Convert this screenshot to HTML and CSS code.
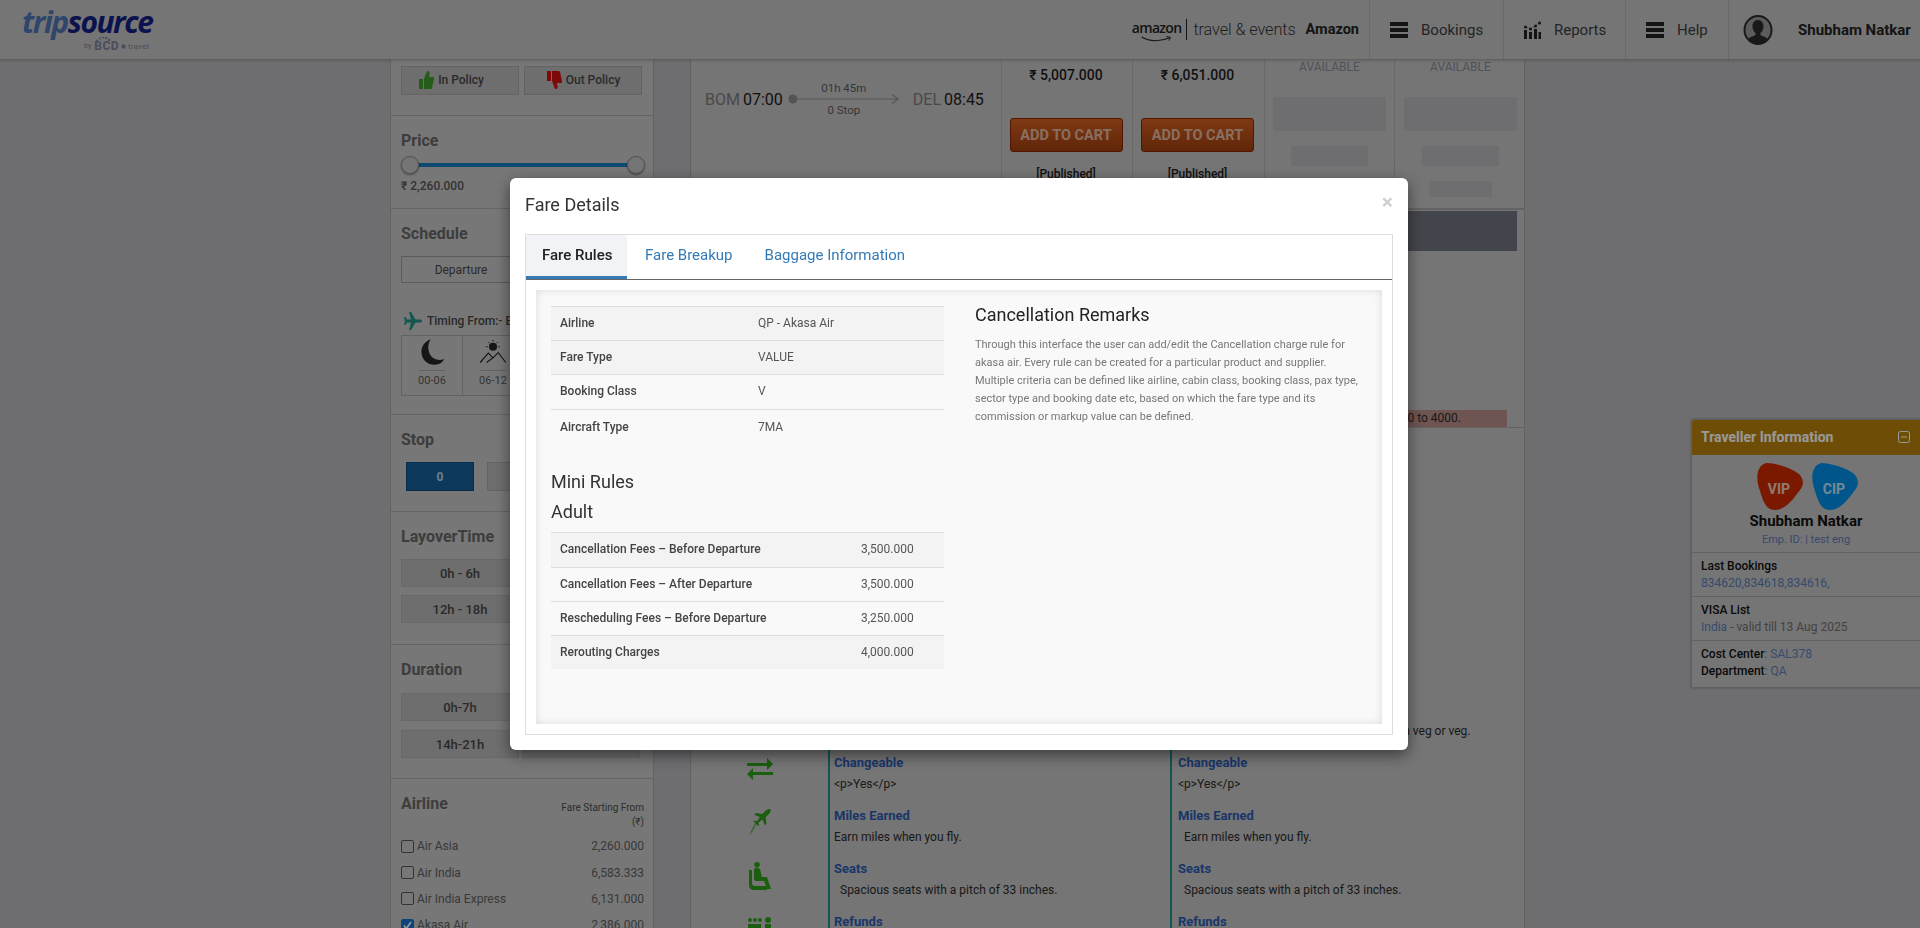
FILE: index.html
```html
<!DOCTYPE html>
<html lang="en">
<head>
<meta charset="utf-8">
<title>Fare Details</title>
<link rel="stylesheet" href="styles.css">
</head>
<body>
<header class="topbar">
  <div class="logo">
    <div class="logo-word"><span class="logo-trip">trip</span><span class="logo-source">source</span></div>
    <div class="logo-by"><span class="by">by</span><span class="bcd">BCD</span><svg class="bcd-dot" viewBox="0 0 6 6"><circle cx="3" cy="3" r="2.6"/></svg><span class="travel">travel</span>
      <svg class="bcd-arc" viewBox="0 0 16 6"><circle cx="2" cy="4.500" r="1"/><circle cx="5" cy="2.500" r="1"/><circle cx="8" cy="1.500" r="1"/><circle cx="11" cy="2" r="1.200"/><circle cx="14" cy="4" r="1.300"/></svg>
    </div>
  </div>
  <div class="brand">
    <span class="amazon">amazon<svg class="smile" viewBox="0 0 40 7"><path d="M2 1c10 6 24 6 35 1" fill="none" stroke="#222" stroke-width="1.4"/><path d="M33 .5l5 1-2 4" fill="none" stroke="#222" stroke-width="1.2"/></svg></span>
    <span class="brand-rule"></span>
    <span class="brand-sub">travel &amp; events</span>
    <span class="brand-co">Amazon</span>
  </div>
  <nav class="nav">
    <a class="nav-item nav-bookings"><svg class="nav-icon" viewBox="0 0 18 16"><path d="M0 0h18v4H0zM0 6h18v4H0zM0 12h18v4H0z"/></svg>Bookings</a>
    <a class="nav-item nav-reports"><svg class="nav-icon" viewBox="0 0 18 18"><path d="M1 9h3v9H1zM6 11h3v7H6zM11 8h3v10h-3zM15.500 11h2.500v7h-2.500z"/><circle cx="2.500" cy="6" r="1.500"/><circle cx="7.500" cy="8" r="1.500"/><circle cx="12.500" cy="5" r="1.500"/><circle cx="16.500" cy="2" r="1.500"/><path d="M2.500 6l5 2 5-3 4-3" fill="none" stroke="#222" stroke-width=".7" stroke-dasharray="1 1"/></svg>Reports</a>
    <a class="nav-item nav-help"><svg class="nav-icon" viewBox="0 0 18 16"><path d="M0 0h18v4H0zM0 6h18v4H0zM0 12h18v4H0z"/></svg>Help</a>
    <a class="nav-item nav-user">
      <svg class="avatar" viewBox="0 0 30 30"><ellipse cx="15" cy="15" rx="13.500" ry="14" fill="#9a9a9a" stroke="#2b2b2b" stroke-width="2"/><path d="M15 5c4 0 5.500 3 5.500 6.500 0 3-1.500 5.500-3 6.500v2c2 1.500 6 2 7.500 4-2.500 3-6 4.500-10 4.500s-7.500-1.500-10-4.500c1.500-2 5.500-2.500 7.500-4v-2c-1.500-1-3-3.500-3-6.500C9.500 8 11 5 15 5z" fill="#2b2b2b"/></svg>
      <span class="user-name">Shubham Natkar</span>
    </a>
  </nav>
</header>

<div class="layout">
  <aside class="sidebar">
    <section class="fs fs-policy">
      <div class="policy-row">
        <button class="policy policy-in"><svg class="thumb" viewBox="0 0 16 20"><path d="M1 9h4v10H1zM6 9l3-8c2 0 3 1 2.500 3L11 7h4c1 0 1.500 1 1 2l-2 9c-.2.700-.7 1-1.500 1H6z" fill="#3f9a2c"/></svg>In Policy</button>
        <button class="policy"><svg class="thumb" viewBox="0 0 16 20"><path d="M1 1h4v10H1zM6 11l3 8c2 0 3-1 2.500-3L11 13h4c1 0 1.500-1 1-2l-2-9c-.2-.700-.7-1-1.500-1H6z" fill="#d01010"/></svg>Out Policy</button>
      </div>
    </section>
    <section class="fs fs-price">
      <h3 class="fs-title">Price</h3>
      <div class="slider"><span class="slider-track"></span><span class="slider-thumb thumb-a"></span><span class="slider-thumb thumb-b"></span></div>
      <div class="price-val">₹ 2,260.000</div>
    </section>
    <section class="fs fs-schedule">
      <h3 class="fs-title">Schedule</h3>
      <div class="tab-box">Departure</div>
      <div class="timing-title"><svg class="timing-plane" viewBox="0 0 20 20"><path d="M19 10c0-1-1-1.500-2-1.500h-4.500L8 1H6l2 7.500H4L2.500 6H1l1 4-1 4h1.500L4 11.500h4L6 19h2l4.500-7.500H17c1 0 2-.5 2-1.500z" fill="#1f8f86"/></svg>Timing From:- BOM</div>
      <div class="time-grid">
        <div class="time-cell"><svg class="time-icon" viewBox="0 0 24 24"><path d="M11 1C5 3 1.500 9 3.500 15.500s9.500 9 15 6.500c2-1 3.500-2.500 4-4-5 2-10.500 0-12.500-4.500S8.500 4.500 11 1z" fill="#262626"/></svg><span class="time-label">00-06</span></div>
        <div class="time-cell"><svg class="time-icon" viewBox="0 0 24 24"><circle cx="12" cy="7.500" r="3.500" fill="#262626"/><path d="M1 21l7-8 4 4 4.500-4.500L23 21M6.500 21l5.500-4" fill="none" stroke="#262626" stroke-width="1"/><path d="M12 1.500v1.500M6 7.500h1.500M16.500 7.500H18M8 3.500l1 1M16 3.500l-1 1" stroke="#262626" stroke-width=".8"/></svg><span class="time-label">06-12</span></div>
        <div class="time-cell"></div>
        <div class="time-cell"></div>
      </div>
    </section>
    <section class="fs fs-stop">
      <h3 class="fs-title">Stop</h3>
      <div class="stop-row"><button class="stop on">0</button><button class="stop">1</button></div>
    </section>
    <section class="fs fs-layover">
      <h3 class="fs-title">LayoverTime</h3>
      <div class="chip-grid"><button class="chip">0h - 6h</button><button class="chip">6h - 12h</button><button class="chip">12h - 18h</button><button class="chip">18h - 24h</button></div>
    </section>
    <section class="fs fs-duration">
      <h3 class="fs-title">Duration</h3>
      <div class="chip-grid"><button class="chip">0h-7h</button><button class="chip">7h-14h</button><button class="chip">14h-21h</button><button class="chip">21h-28h</button></div>
    </section>
    <section class="fs fs-airline">
      <div class="airline-head"><h3 class="fs-title">Airline</h3><div class="fare-from">Fare Starting From<br>(₹)</div></div>
      <div class="airline-list">
        <label class="airline"><span class="check"></span><span class="airline-name">Air Asia</span><span class="airline-fare">2,260.000</span></label>
        <label class="airline"><span class="check"></span><span class="airline-name">Air India</span><span class="airline-fare">6,583.333</span></label>
        <label class="airline"><span class="check"></span><span class="airline-name">Air India Express</span><span class="airline-fare">6,131.000</span></label>
        <label class="airline"><span class="check on"><svg viewBox="0 0 14 14"><path d="M2.500 7l3 4L11.500 2.500" fill="none" stroke="#fff" stroke-width="2.200"/></svg></span><span class="airline-name">Akasa Air</span><span class="airline-fare">2,386.000</span></label>
      </div>
    </section>
  </aside>

  <main class="results">
    <div class="flight">
      <div class="flight-seg">
        <span class="code">BOM</span><span class="time">07:00</span>
        <div class="route"><span class="route-top">01h 45m</span><svg class="route-line" viewBox="0 0 112 12"><circle cx="5" cy="6" r="4.500" fill="#8d8d8d"/><path d="M5 6h105M104 1.500l6 4.500-6 4.500" fill="none" stroke="#8d8d8d" stroke-width="1.200"/></svg><span class="route-bot">0 Stop</span></div>
        <span class="code">DEL</span><span class="time">08:45</span>
      </div>
      <div class="fare-col"><div class="fare-price">₹ 5,007.000</div><button class="cart">ADD TO CART</button><div class="fare-tag">[Published]</div></div>
      <div class="fare-col"><div class="fare-price">₹ 6,051.000</div><button class="cart">ADD TO CART</button><div class="fare-tag">[Published]</div></div>
      <div class="fare-col na"><div class="na-label">AVAILABLE</div><span class="sk sk-a"></span><span class="sk sk-b"></span><span class="sk sk-c"></span></div>
      <div class="fare-col na"><div class="na-label">AVAILABLE</div><span class="sk sk-a"></span><span class="sk sk-b"></span><span class="sk sk-c"></span></div>
    </div>
    <div class="detail">
      <div class="detail-band"></div>
      <div class="detail-note">Rerouting charges range from 3000 to 4000.</div>
    </div>
    <div class="amenities">
      <div class="am-row">
        <div class="am-icon"></div>
        <div class="am-col"><h4 class="am-title">Meal</h4><p class="am-text">Choose non veg or veg.</p></div>
        <div class="am-col"><h4 class="am-title">Meal</h4><p class="am-text am-meal">Complimentary meal, choose between non veg or veg.</p></div>
      </div>
      <div class="am-row">
        <div class="am-icon"><svg viewBox="0 0 26 22"><path d="M0 5h20V0l6 6-6 6V8H0zM26 14H6V10l-6 6 6 6v-5h20z" fill="#2f9d1a"/></svg></div>
        <div class="am-col"><h4 class="am-title">Changeable</h4><p class="am-text">&lt;p&gt;Yes&lt;/p&gt;</p></div>
        <div class="am-col"><h4 class="am-title">Changeable</h4><p class="am-text">&lt;p&gt;Yes&lt;/p&gt;</p></div>
      </div>
      <div class="am-row">
        <div class="am-icon"><svg viewBox="0 0 26 32"><path d="M24 0c-2 0-4 2-6 4l-2 2-8-1-2 2 7 3-4 5-3-1-1 1 3 3 3 3 1-1-1-3 5-4 3 7 2-2-1-8 2-2c2-2 4-4 4-6 0-1 0-2-1-2z" fill="#2f9d1a"/><path d="M8 18L1 31" stroke="#2f9d1a" stroke-width="2" stroke-dasharray="1.500 1"/></svg></div>
        <div class="am-col"><h4 class="am-title">Miles Earned</h4><p class="am-text">Earn miles when you fly.</p></div>
        <div class="am-col"><h4 class="am-title">Miles Earned</h4><p class="am-text in">Earn miles when you fly.</p></div>
      </div>
      <div class="am-row">
        <div class="am-icon am-seat"><svg viewBox="0 0 24 28"><circle cx="9" cy="2.800" r="2.800" fill="#2f9d1a"/><path d="M1 8h3v13c0 2 1 3 3 3h12v4H6c-3 0-5-2-5-5z" fill="#2f9d1a"/><path d="M6 7c0-1.500 5-1.500 6 0l2 8h5l4 12h-4l-3-8h-8c-1 0-2-1-2-2z" fill="#2f9d1a"/></svg></div>
        <div class="am-col"><h4 class="am-title">Seats</h4><p class="am-text in">Spacious seats with a pitch of 33 inches.</p></div>
        <div class="am-col"><h4 class="am-title">Seats</h4><p class="am-text in">Spacious seats with a pitch of 33 inches.</p></div>
      </div>
      <div class="am-row">
        <div class="am-icon"><svg viewBox="0 0 26 22"><path d="M1 7h13v14H1zM18 7h6v8h-1v6h-4v-6h-1z" fill="#2f9d1a"/><circle cx="3" cy="3" r="2" fill="#2f9d1a"/><circle cx="8" cy="3" r="2" fill="#2f9d1a"/><circle cx="13" cy="3" r="2" fill="#2f9d1a"/><circle cx="21" cy="3" r="3" fill="#2f9d1a"/></svg></div>
        <div class="am-col"><h4 class="am-title">Refunds</h4></div>
        <div class="am-col"><h4 class="am-title">Refunds</h4></div>
      </div>
    </div>
  </main>
</div>

<aside class="traveller">
  <div class="tr-head"><span>Traveller Information</span><svg class="tr-toggle" viewBox="0 0 12 12"><rect x=".5" y=".5" width="11" height="11" rx="2" fill="none" stroke="#fff"/><path d="M3 6h6" stroke="#fff"/></svg></div>
  <div class="tr-profile">
    <div class="tr-badges">
      <span class="badge"><svg viewBox="0 0 47 47"><path d="M10 0C20 0 36 5 43 11c5 5 5 11 1 16-6 8-14 20-25 20-9 0-12-9-15-19C1 20-2 4 10 0z" fill="#cc2800"/></svg><b class="badge-text">VIP</b></span>
      <span class="badge"><svg viewBox="0 0 47 47"><path d="M10 0C20 0 36 5 43 11c5 5 5 11 1 16-6 8-14 20-25 20-9 0-12-9-15-19C1 20-2 4 10 0z" fill="#0090e6"/></svg><b class="badge-text">CIP</b></span>
    </div>
    <div class="tr-name">Shubham Natkar</div>
    <div class="tr-emp">Emp. ID: | test eng</div>
  </div>
  <div class="tr-block"><div class="tr-key">Last Bookings</div><div class="tr-link">834620,834618,834616,</div></div>
  <div class="tr-block"><div class="tr-key">VISA List</div><div class="tr-visa"><span class="tr-link">India</span> - valid till 13 Aug 2025</div></div>
  <div class="tr-block tr-last"><div class="tr-plain"><span class="tr-key">Cost Center</span>: <span class="tr-link">SAL378</span></div><div class="tr-plain"><span class="tr-key">Department</span>: <span class="tr-link">QA</span></div></div>
</aside>

<div class="backdrop"></div>

<div class="modal-wrap">
  <div class="modal">
    <div class="modal-head">
      <h2 class="modal-title">Fare Details</h2>
      <span class="modal-close">×</span>
    </div>
    <div class="tabs-box">
      <div class="tabs">
        <a class="tab active">Fare Rules</a>
        <a class="tab">Fare Breakup</a>
        <a class="tab">Baggage Information</a>
      </div>
      <div class="panel">
        <div class="panel-left">
          <table class="rules t-info">
            <tr class="fill"><th>Airline</th><td>QP - Akasa Air</td></tr>
            <tr class="fill"><th>Fare Type</th><td>VALUE</td></tr>
            <tr class="tall"><th>Booking Class</th><td>V</td></tr>
            <tr><th>Aircraft Type</th><td>7MA</td></tr>
          </table>
          <h4 class="sub mini">Mini Rules</h4>
          <h4 class="sub adult">Adult</h4>
          <table class="rules t-mini">
            <tr class="fill tall"><th>Cancellation Fees – Before Departure</th><td>3,500.000</td></tr>
            <tr><th>Cancellation Fees – After Departure</th><td>3,500.000</td></tr>
            <tr><th>Rescheduling Fees – Before Departure</th><td>3,250.000</td></tr>
            <tr class="fill"><th>Rerouting Charges</th><td>4,000.000</td></tr>
          </table>
        </div>
        <div class="panel-right">
          <h4 class="sub remarks">Cancellation Remarks</h4>
          <p class="remarks-text">Through this interface the user can add/edit the Cancellation charge rule for akasa air. Every rule can be created for a particular product and supplier. Multiple criteria can be defined like airline, cabin class, booking class, pax type, sector type and booking date etc, based on which the fare type and its commission or markup value can be defined.</p>
        </div>
      </div>
    </div>
  </div>
</div>
</body>
</html>
```

FILE: styles.css
```css
* { box-sizing: border-box; }
html, body { margin: 0; height: 928px; overflow: hidden; }
body { background: #b7b7bb; font-family: Roboto, "Liberation Sans", sans-serif; font-size: 12px; color: #2b2b2b; }
button { font-family: inherit; }
h2, h3, h4, p { margin: 0; }

/* top bar */
.topbar { position: relative; z-index: 2; height: 59px; display: flex; align-items: stretch; background: #c3c3c3; box-shadow: 0 1px 3px rgba(0,0,0,.25); }
.logo { width: 280px; padding: 6px 0 0 22px; }
.logo-word { font-family: "Open Sans", sans-serif; font-style: italic; font-weight: 700; font-size: 30px; line-height: 32px; letter-spacing: -1.5px; }
.logo-trip { color: #4f74b4; }
.logo-source { color: #141e80; }
.logo-by { position: relative; display: flex; align-items: center; padding-left: 62px; height: 14px; color: #7a8099; margin-top: 1px; }
.by { font-size: 7px; margin-right: 3px; }
.bcd { font-size: 12px; font-weight: 700; letter-spacing: .5px; }
.bcd-dot { width: 5px; height: 5px; margin: 0 2px; fill: #7a8099; }
.bcd-arc { position: absolute; left: 73px; top: -3px; width: 16px; height: 6px; fill: #7a8099; }
.travel { font-size: 8px; letter-spacing: .3px; }
.brand { margin-left: auto; display: flex; align-items: center; padding-right: 10px; color: #222; }
.amazon { position: relative; font-family: "Open Sans", sans-serif; font-weight: 600; font-size: 14px; letter-spacing: -.7px; line-height: 16px; padding-bottom: 3px; }
.smile { position: absolute; left: 8px; bottom: -3px; width: 32px; height: 6px; }
.brand-rule { width: 1px; height: 21px; background: #222; margin: 0 6px 0 5px; }
.brand-sub { font-size: 16.300px; font-weight: 300; letter-spacing: -.1px; color: #333; margin-right: 10px; }
.brand-co { font-size: 14.500px; font-weight: 700; }
.nav { display: flex; }
.nav-item { display: flex; align-items: center; border-left: 1px solid #aeaeae; font-size: 15px; color: #3b3b3b; }
.nav-bookings { width: 134px; padding-left: 20px; }
.nav-reports { width: 122px; padding-left: 19px; }
.nav-help { width: 103px; padding-left: 20px; }
.nav-user { width: 192px; padding-left: 14px; }
.nav-icon { width: 18px; height: 16px; margin-right: 13px; fill: #222; }
.nav-reports .nav-icon { height: 18px; }
.avatar { width: 30px; height: 30px; margin-right: 25px; }
.user-name { font-weight: 700; font-size: 15px; color: #222; }

/* page */
.layout { display: flex; padding-left: 390px; gap: 36px; }
.sidebar { width: 264px; flex: none; background: #c6c6c6; border-left: 1px solid #a6a6a6; border-right: 1px solid #a6a6a6; }
.fs { padding: 15px 10px 0; border-bottom: 1px solid #a9a9a9; }
.fs-policy { height: 57px; padding-top: 7px; }
.fs-price { height: 93px; }
.fs-schedule { height: 206px; }
.fs-stop { height: 97px; }
.fs-layover { height: 133px; }
.fs-duration { height: 134px; }
.fs-airline { border-bottom: 0; }
.fs-title { font-size: 16px; line-height: 20px; font-weight: 700; color: #666; }

.policy-row { display: flex; gap: 5px; }
.policy { width: 118px; height: 29px; display: flex; align-items: center; justify-content: center; gap: 4px; padding: 0 0 1px; background: #b7b7b7; border: 1px solid #a6a6a6; font-size: 12px; font-weight: 500; color: #474747; }
.policy-in { padding-right: 18px; }
.thumb { width: 16px; height: 20px; }

.slider { position: relative; height: 18px; margin-top: 5px; }
.slider-track { position: absolute; left: 9px; right: 9px; top: 7px; height: 4px; background: #167cbb; }
.slider-thumb { position: absolute; top: 0; width: 18px; height: 18px; border-radius: 50%; background: #c4c4c4; border: 1px solid #8a8a8a; box-shadow: 0 1px 2px rgba(0,0,0,.4); }
.thumb-a { left: 0; }
.thumb-b { right: -2px; }
.price-val { margin-top: 4px; line-height: 16px; font-weight: 500; color: #555; }

.tab-box { margin-top: 12px; width: 120px; height: 27px; display: flex; align-items: center; justify-content: center; border: 1px solid #999; color: #474747; }
.timing-title { display: flex; align-items: center; margin-top: 30px; height: 16px; font-weight: 500; color: #474747; white-space: nowrap; }
.timing-plane { width: 20px; height: 20px; margin: 0 4px 0 2px; }
.time-grid { display: flex; margin-top: 6px; height: 61px; width: 244px; border: 1px solid #a4a4a4; }
.time-cell { width: 61px; flex: none; border-right: 1px solid #a4a4a4; display: flex; flex-direction: column; align-items: center; padding-top: 2px; }
.time-icon { width: 28px; height: 28px; flex: none; }
.time-label { width: 26px; margin-top: 4px; padding-top: 3px; border-top: 1px solid #a4a4a4; font-size: 11px; line-height: 14px; color: #5a5a5a; text-align: center; white-space: nowrap; display: flex; justify-content: center; }

.stop-row { display: flex; gap: 13px; margin: 12px 0 0 5px; }
.stop { width: 68px; height: 29px; padding: 0; background: #b7b7b7; border: 1px solid #a6a6a6; font-size: 12px; font-weight: 700; color: #555; }
.stop.on { background: #16619a; border-color: #104a78; color: #b9d2ea; }

.chip-grid { display: grid; grid-template-columns: 118px 118px; gap: 8px 3px; margin-top: 12px; }
.fs-duration .chip-grid { margin-top: 13px; row-gap: 9px; }
.chip { height: 28px; padding: 0; background: #b7b7b7; border: 1px solid #aeaeae; font-size: 13px; font-weight: 500; color: #474747; }

.airline-head { display: flex; justify-content: space-between; height: 35px; }
.fs-airline { padding-right: 9px; }
.fare-from { width: 110px; margin-top: 7px; text-align: right; font-size: 10px; line-height: 14px; color: #4d4d4d; }
.airline-list { margin-top: 4px; }
.airline { display: flex; align-items: center; height: 26.400px; }
.check { width: 13px; height: 13px; border: 1px solid #555; border-radius: 2px; margin-right: 3px; background: #c6c6c6; display: block; }
.check.on { background: #1a73d0; border-color: #1a73d0; }
.check svg { display: block; width: 11px; height: 11px; }
.airline-name { color: #606060; }
.airline-fare { margin-left: auto; color: #606060; }

/* results */
.results { width: 835px; flex: none; }
.flight { display: grid; grid-template-columns: 310px 131px 132px 130px 132px; height: 151px; background: #c3c3c3; border-left: 1px solid #a4a4a4; border-right: 1px solid #a4a4a4; border-bottom: 2px solid #a6a6a6; overflow: hidden; }
.flight-seg { display: flex; align-items: center; height: 80px; padding-left: 14px; }
.code { font-size: 16px; color: #7a7a7a; margin-right: 3px; }
.time { font-size: 16px; color: #1c1c1c; }
.route { position: relative; width: 112px; margin: 0 13px 0 5px; display: flex; flex-direction: column; align-items: center; font-size: 11.500px; color: #5c5c5c; }
.route-top, .route-bot { line-height: 14px; }
.route-line { width: 112px; height: 12px; margin: -2px 0; display: block; }
.fare-col { display: flex; flex-direction: column; align-items: center; border-left: 1px solid #adadad; }
.fare-price { margin: 8px 2px 0 0; line-height: 16px; font-size: 14px; font-weight: 500; color: #1c1c1c; }
.cart { width: 113px; height: 34px; margin: 35px 2px 0 0; padding: 0; flex: none; border: 1px solid #8c2604; border-radius: 3px; background: linear-gradient(#d45f20, #a0400f); font-size: 14.500px; font-weight: 700; color: #e3b9a0; }
.fare-tag { margin: 14px 2px 0 0; line-height: 16px; font-weight: 500; font-size: 12px; color: #1c1c1c; }
.na-label { line-height: 16px; color: #858996; }
.sk { display: block; background: #b8b8bc; border-radius: 2px; flex: none; }
.sk-a { width: 113px; height: 34px; margin-top: 22px; }
.sk-b { width: 77px; height: 20px; margin-top: 15px; border-radius: 0; }
.sk-c { width: 63px; height: 16px; margin-top: 15px; border-radius: 0; }

.detail { height: 218px; padding: 1px 8px 0; background: #c3c3c3; border-left: 1px solid #a4a4a4; border-right: 1px solid #a4a4a4; border-bottom: 1px solid #a6a6a6; display: flex; flex-direction: column; }
.detail-band { height: 40px; margin-right: -1px; background: #71747f; }
.detail-note { margin-top: auto; height: 17px; margin-right: 9px; padding-right: 46px; text-align: right; line-height: 16px; background: #b78e89; color: #2b2b2b; }

.amenities { padding-top: 273px; border-left: 1px solid #a4a4a4; border-right: 1px solid #a4a4a4; background: #c3c3c3; }
.am-row { display: grid; grid-template-columns: 137px 342px 1fr; height: 53px; }
.am-icon { display: flex; justify-content: center; padding-top: 2px; }
.am-icon svg { width: 26px; height: 26px; }
.am-seat svg { width: 24px; height: 28px; }
.am-col { border-left: 2px solid #1f8f86; padding-left: 4px; }
.am-col + .am-col { padding-left: 6px; }
.am-title { line-height: 17px; font-size: 13px; font-weight: 700; color: #2c5ab0; }
.am-text { margin-top: 5px; line-height: 16px; color: #2b2b2b; white-space: nowrap; }
.am-text.in { padding-left: 6px; }
.am-meal { padding-left: 5px; }

/* traveller */
.traveller { position: absolute; left: 1691px; top: 419px; width: 229px; height: 269px; background: #c3c3c3; border: 1px solid #a0a0a0; border-right: 0; box-shadow: 0 0 2px rgba(0,0,0,.3); }
.tr-head { height: 35px; display: flex; align-items: center; justify-content: space-between; padding: 0 10px 2px 9px; background: #b7820d; border-radius: 2px 0 0 0; font-size: 14px; font-weight: 700; color: #fff; }
.tr-toggle { width: 12px; height: 12px; }
.tr-profile { height: 98px; padding-top: 8px; text-align: center; border-bottom: 1px solid #a4a4a4; }
.tr-badges { display: flex; justify-content: center; gap: 8px; height: 47px; padding-left: 1px; }
.badge { position: relative; width: 47px; height: 47px; display: block; }
.badge svg { display: block; width: 47px; height: 47px; }
.badge-text { position: absolute; left: 0; right: 0; top: 16px; text-align: center; font-size: 14px; line-height: 20px; color: #fff; opacity: .75; }
.tr-name { margin-top: 2px; font-size: 15px; line-height: 18px; font-weight: 700; color: #111; }
.tr-emp { margin-top: 1px; font-size: 11px; line-height: 18px; color: #5a7db5; }
.tr-block { height: 44px; padding: 5px 9px 0; line-height: 17px; border-bottom: 1px solid #a4a4a4; white-space: nowrap; }
.tr-last { height: 46px; border-bottom: 0; }
.tr-key { font-weight: 500; color: #111; }
.tr-link { color: #5a7db5; }
.tr-visa { color: #6e6e6e; }
.tr-plain { color: #5a7db5; }

/* modal */
.backdrop { position: fixed; inset: 0; z-index: 5; background: rgba(0,0,0,.4); }
.modal-wrap { position: fixed; inset: 0; z-index: 6; padding: 178px 0 0 510px; }
.modal { width: 898px; height: 572px; background: #fff; border-radius: 6px; box-shadow: 0 5px 15px rgba(0,0,0,.5); padding: 0 15px; }
.modal-head { position: relative; height: 56px; padding-top: 16px; }
.modal-title { font-size: 18px; line-height: 22px; font-weight: 400; color: #333; }
.modal-close { position: absolute; right: 0; top: 12px; font-size: 21px; line-height: 24px; font-weight: 700; color: #cfcfcf; }
.tabs-box { height: 501px; border: 1px solid #ddd; }
.tabs { display: flex; height: 45px; border-bottom: 1px solid #666; }
.tab { height: 44px; padding: 0 13px; line-height: 41px; font-size: 15px; color: #337ab7; margin-right: 6px; }
.tab.active { width: 101px; padding: 0 0 0 16px; background: #f1f3f7; border-bottom: 3px solid #337ab7; border-radius: 3px 3px 0 0; font-weight: 500; color: #222; white-space: nowrap; margin-right: 5px; }
.panel { display: flex; gap: 31px; height: 434px; margin: 10px; padding: 16px 15px 0; background: #f9f9f9; box-shadow: inset 0 0 8px rgba(0,0,0,.12); }
.panel-left { width: 393px; flex: none; }
.rules { width: 393px; border-collapse: collapse; table-layout: fixed; font-size: 12px; color: #555; }
.rules th, .rules td { height: 34px; padding: 0 9px; text-align: left; border-top: 1px solid #ddd; }
.rules th { font-weight: 500; color: #444; }
.rules tr.fill { background: #f3f3f3; }
.rules tr.tall th, .rules tr.tall td { height: 35px; padding-bottom: 1px; }
.t-info tr:nth-child(-n+3) th, .t-info tr:nth-child(-n+3) td { padding-bottom: 2px; }
.t-info th { width: 198px; }
.t-mini th { width: 301px; }
.sub { font-size: 18px; line-height: 22px; font-weight: 400; color: #333; }
.mini { margin-top: 27px; }
.adult { margin-top: 8px; margin-bottom: 9px; }
.remarks { margin-top: -2px; color: #222; }
.panel-right { width: 390px; }
.remarks-text { margin-top: 10px; font-size: 11px; line-height: 18px; color: #777; }
```
